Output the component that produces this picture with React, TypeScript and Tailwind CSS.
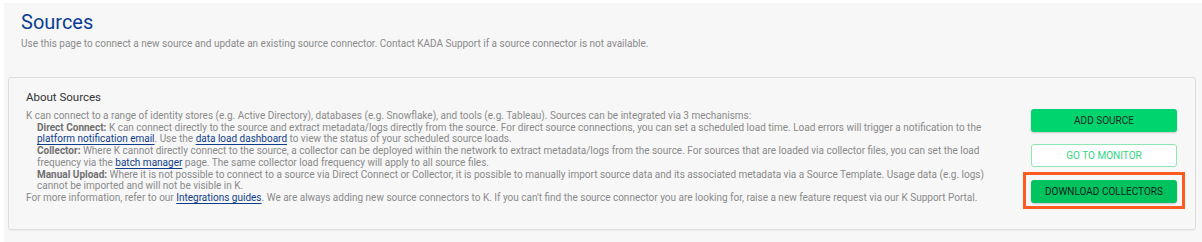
import React from "react";

const Link = ({ children }: { children: React.ReactNode }) => (
  <a href="#" className="text-[#0f3d8a] underline underline-offset-2">
    {children}
  </a>
);

export default function App() {
  return (
    <div className="w-[1202px] h-[242px] bg-white pl-[4px] pt-[3px] font-['Roboto',sans-serif]">
      <div className="h-full bg-[#f7f7f7] pt-[6px]">
        <div className="pl-[17px]">
          <h1 className="text-[20px] leading-[26px] text-[#0b3d91]">Sources</h1>
          <p className="mt-[2px] text-[10px] leading-[14px] text-[#8a8a8a]">
            Use this page to connect a new source and update an existing source connector. Contact KADA Support if a
            source connector is not available.
          </p>
        </div>
        <div className="mt-[26px] ml-[4px] mr-[6px] h-[153px] rounded-[3px] border border-[#dedede] shadow-[0_1px_1px_rgba(0,0,0,0.05)] flex pl-[17px] pr-[18px] pt-[12px]">
          <div className="w-[962px]">
            <h2 className="text-[11.5px] leading-[14px] text-[#333]">About Sources</h2>
            <div className="mt-[6px] text-[10px] leading-[11.7px] text-[#8a8a8a]">
              <p>
                K can connect to a range of identity stores (e.g. Active Directory), databases (e.g. Snowflake), and
                tools (e.g. Tableau). Sources can be integrated via 3 mechanisms:
              </p>
              <div className="pl-[11px]">
                <p>
                  <b className="font-bold text-[#707070]">Direct Connect:</b> K can connect directly to the source and
                  extract metadata/logs directly from the source. For direct source connections, you can set a
                  scheduled load time. Load errors will trigger a notification to the{" "}
                  <Link>platform notification email</Link>. Use the <Link>data load dashboard</Link> to view the status
                  of your scheduled source loads.
                </p>
                <p>
                  <b className="font-bold text-[#707070]">Collector:</b> Where K cannot directly connect to the source, a
                  collector can be deployed within the network to extract metadata/logs from the source. For sources
                  that are loaded via collector files, you can set the load frequency via the{" "}
                  <Link>batch manager</Link> page. The same collector load frequency will apply to all source files.
                </p>
                <p>
                  <b className="font-bold text-[#707070]">Manual Upload:</b> Where it is not possible to connect to a
                  source via Direct Connect or Collector, it is possible to manually import source data and its
                  associated metadata via a Source Template. Usage data (e.g. logs) cannot be imported and will not be
                  visible in K.
                </p>
              </div>
              <p>
                For more information, refer to our <Link>Integrations guides</Link>. We are always adding new source
                connectors to K. If you can't find the source connector you are looking for, raise a new feature
                request via our K Support Portal.
              </p>
            </div>
          </div>
          <div className="ml-auto flex flex-col pt-[19px] w-[146px]">
            <button className="h-[23px] rounded-[3px] bg-[#00d46e] text-[10px] text-[#1c2b22] shadow-[0_1px_2px_rgba(0,0,0,0.2)]">
              ADD SOURCE
            </button>
            <button className="mt-[12px] h-[23px] rounded-[3px] border border-[#8ee6b4] bg-white text-[10px] text-[#2fd67f]">
              GO TO MONITOR
            </button>
            <div className="mt-[5px] -mx-[8px] border-[3px] border-[#ff5a1f] px-[5px] py-[3px]">
              <button className="w-full h-[23px] rounded-[3px] bg-[#00c25f] text-[10px] text-[#15241a] shadow-[0_1px_2px_rgba(0,0,0,0.2)]">
                DOWNLOAD COLLECTORS
              </button>
            </div>
          </div>
        </div>
      </div>
    </div>
  );
}
